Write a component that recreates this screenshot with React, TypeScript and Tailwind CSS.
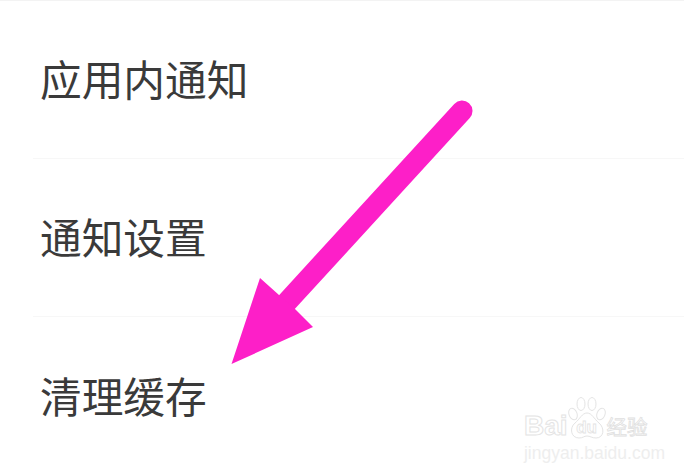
import React from 'react';

const rows = ['应用内通知', '通知设置', '清理缓存'];

const Arrow = () => (
  <svg className="absolute inset-0" width="684" height="472" viewBox="0 0 684 472" fill="none">
    <path d="M462 111 L287 302" stroke="#fd1fc8" strokeWidth="21" strokeLinecap="round" />
    <path d="M231.500 364 L260 278 L279 295 L295 309 L313 327 Z" fill="#fd1fc8" />
  </svg>
);

const Paw = () => (
  <svg className="absolute inset-0" width="38" height="42" viewBox="0 0 38 42" fill="none" stroke="#e4e4e4" strokeWidth="1">
    <ellipse cx="5" cy="17" rx="4" ry="6" transform="rotate(-20 5 17)" />
    <ellipse cx="13" cy="7" rx="4" ry="6.500" />
    <ellipse cx="24" cy="7" rx="4" ry="6.500" />
    <ellipse cx="33" cy="17" rx="4" ry="6" transform="rotate(20 33 17)" />
    <path d="M19 16 C14 16 12 22 7 26 C1 31 3 41 11 41 C15 41 16 39 19 39 C22 39 24 41 28 41 C36 41 37 31 31 26 C26 22 24 16 19 16 Z" />
  </svg>
);

const Watermark = () => (
  <div className="absolute right-[38px] bottom-[10px] flex flex-col items-start gap-[5px] translate-x-[19px]">
    <div className="flex items-end">
      <span className="text-[28px] leading-[26px] font-bold text-transparent [-webkit-text-stroke:1px_#e4e4e4] font-['Liberation_Sans',sans-serif]">Bai</span>
      <div className="relative flex items-end justify-center w-[38px] h-[42px] pb-[2px]">
        <Paw />
        <span className="text-[17px] leading-[18px] font-bold text-transparent [-webkit-text-stroke:0.8px_#e4e4e4] font-['Liberation_Sans',sans-serif]">du</span>
      </div>
      <span className="ml-[1px] text-[20.500px] leading-[26px] text-transparent [-webkit-text-stroke:0.8px_#e0e0e0] font-['Noto_Sans_CJK_SC',sans-serif]">经验</span>
    </div>
    <span className="text-[17.500px] leading-[18px] text-[#eeeeee] font-['Liberation_Sans',sans-serif]">jingyan.baidu.com</span>
  </div>
);

export default function App() {
  return (
    <div className="relative w-[684px] h-[472px] overflow-hidden bg-white">
      <div className="h-[1px] bg-[#f3f3f3]" />
      <div className="pl-[33px]">
        {rows.map((label, i) => (
          <div
            key={label}
            className={`flex items-center h-[158px] pl-[7px] pb-[2px] text-[41.700px] text-[#3a3a3a] font-['Noto_Sans_CJK_SC',sans-serif] ${i < 2 ? 'border-b border-[#f7f7f7]' : ''}`}
          >
            {label}
          </div>
        ))}
      </div>
      <Arrow />
      <Watermark />
    </div>
  );
}
